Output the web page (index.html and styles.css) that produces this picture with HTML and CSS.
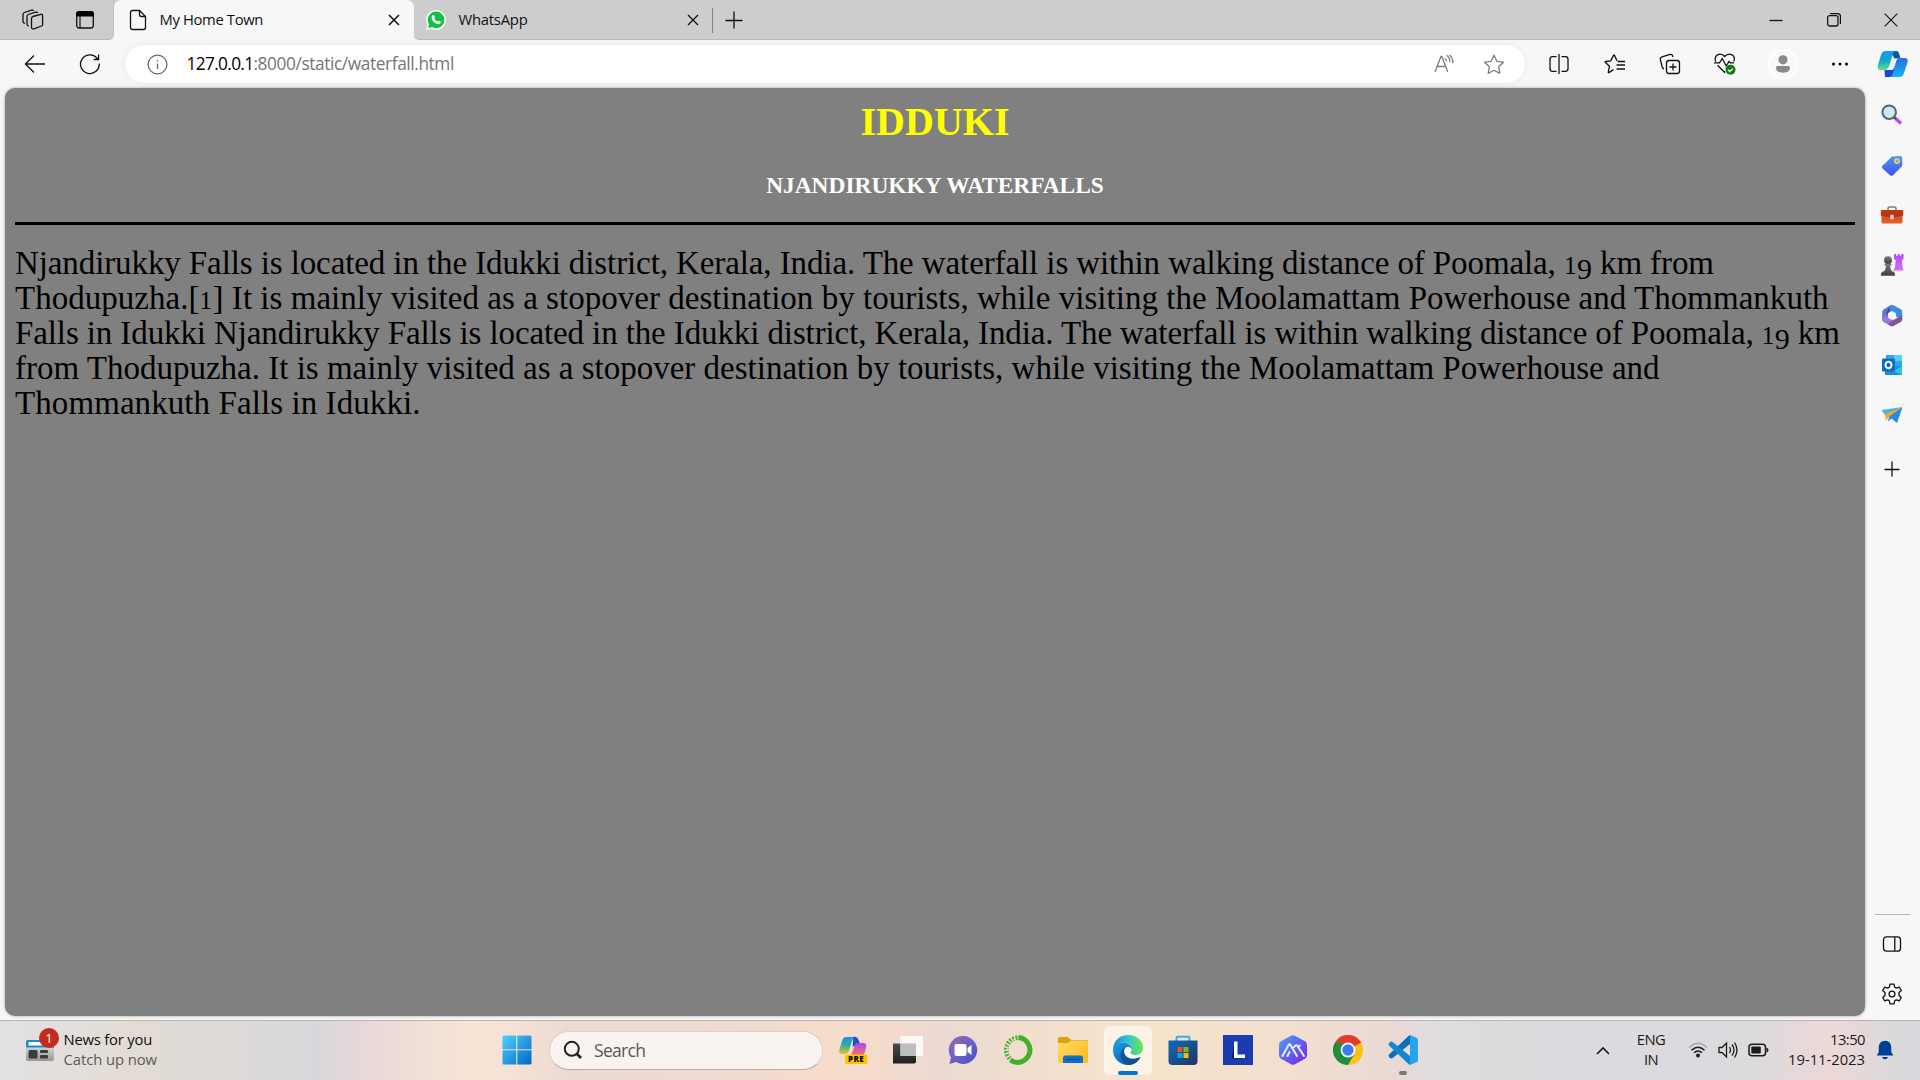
FILE: index.html
```html
<!DOCTYPE html>
<html lang="en">
<head>
<meta charset="utf-8">
<title>My Home Town</title>
<link rel="stylesheet" href="styles.css">
</head>
<body>
<svg class="defs" width="0" height="0">
  <defs>
    <linearGradient id="gWin" x1="0" y1="0" x2="1" y2="1"><stop offset="0" stop-color="#4fd0ff"/><stop offset="1" stop-color="#0067c8"/></linearGradient>
    <linearGradient id="gCopA" x1="0" y1="0" x2="0" y2="1"><stop offset="0" stop-color="#159bea"/><stop offset=".5" stop-color="#13a5cf"/><stop offset="1" stop-color="#5ee08c"/></linearGradient>
    <linearGradient id="gCopB" x1="0" y1="0" x2="0" y2="1"><stop offset="0" stop-color="#2a6cdc"/><stop offset="1" stop-color="#18b5fb"/></linearGradient>
    <linearGradient id="gPreA" x1="0" y1="0" x2="0" y2="1"><stop offset="0" stop-color="#1b8fe8"/><stop offset=".5" stop-color="#2fae9c"/><stop offset="1" stop-color="#f2c51b"/></linearGradient>
    <linearGradient id="gPreB" x1="0" y1="0" x2="0" y2="1"><stop offset="0" stop-color="#a34be8"/><stop offset="1" stop-color="#fb6a7c"/></linearGradient>
    <linearGradient id="gTag" x1="0" y1="0" x2="0" y2="1"><stop offset="0" stop-color="#3f9bf5"/><stop offset="1" stop-color="#4b4ff0"/></linearGradient>
    <linearGradient id="gBox" x1="0" y1="0" x2="0" y2="1"><stop offset="0" stop-color="#c8441b"/><stop offset="1" stop-color="#e8602a"/></linearGradient>
    <linearGradient id="gRook" x1="0" y1="0" x2="0" y2="1"><stop offset="0" stop-color="#b44df5"/><stop offset="1" stop-color="#d36bff"/></linearGradient>
    <linearGradient id="gPawn" x1="0" y1="0" x2="0" y2="1"><stop offset="0" stop-color="#7b7b7b"/><stop offset="1" stop-color="#3d3d3d"/></linearGradient>
    <linearGradient id="gChat" x1="0" y1="0" x2="1" y2="1"><stop offset="0" stop-color="#9a6bb0"/><stop offset=".5" stop-color="#6a5fc8"/><stop offset="1" stop-color="#4a52c8"/></linearGradient>
    <linearGradient id="gFold" x1="0" y1="0" x2="1" y2="1"><stop offset="0" stop-color="#ffdd68"/><stop offset="1" stop-color="#fbb914"/></linearGradient>
    <linearGradient id="gEdgeA" x1="0" y1="0" x2="1" y2="0"><stop offset="0" stop-color="#1587d8"/><stop offset=".45" stop-color="#2ec0da"/><stop offset="1" stop-color="#6be84a"/></linearGradient>
    <linearGradient id="gEdgeB" x1="0" y1="0" x2="1" y2="1"><stop offset="0" stop-color="#1a9ee5"/><stop offset="1" stop-color="#0d4d96"/></linearGradient>
    <linearGradient id="gStore" x1="0" y1="0" x2="1" y2="1"><stop offset="0" stop-color="#0f6cbd"/><stop offset="1" stop-color="#24345c"/></linearGradient>
    <linearGradient id="gHex" x1="0" y1="0" x2="1" y2="1"><stop offset="0" stop-color="#4ba3f5"/><stop offset="1" stop-color="#7a1fe8"/></linearGradient>
    <linearGradient id="gDark" x1="0" y1="0" x2="0" y2="1"><stop offset="0" stop-color="#4a4a4a"/><stop offset="1" stop-color="#1f1f1f"/></linearGradient>
    <linearGradient id="gNews" x1="0" y1="0" x2="0" y2="1"><stop offset="0" stop-color="#d0d0d0"/><stop offset="1" stop-color="#979797"/></linearGradient>
  </defs>
</svg>

<header class="tabstrip">
  <div class="cell ws"><svg width="22" height="22" viewBox="0 0 22 22" class="ln"><path d="M9.500 9.500q0-1.600 1.500-2L18.800 5.300q1.800-.4 1.800 1.400v8.800q0 1.100-1 1.500L12 19.800q-2.500.7-2.500-1.500z"/><path d="M6.800 17.200Q5 16.800 5 15V7.500Q5 6 6.300 5.500L13.500 3.200Q15.300 2.700 15.800 4"/><path d="M3 14.300Q1 14 1 12.500V5.500Q1 4 2.300 3.500L9.500 1.200Q11 .8 11.600 1.800"/></svg></div>
  <div class="cell ta"><svg width="20" height="20" viewBox="0 0 20 20"><rect x="1.700" y="2" width="16.600" height="16" rx="2.500" fill="none" stroke="#111" stroke-width="1.300"/><path d="M1 6.500V4q0-3 3-3h12q3 0 3 3v2.500z" fill="#000"/><path d="M5 6v12" stroke="#111" stroke-width="1.200"/></svg></div>
  <div class="tab active">
    <svg width="18" height="22" viewBox="0 0 18 22" class="ln doc"><path d="M3.500 1.500h7l6 6v11q0 2-2 2h-11q-2 0-2-2v-15q0-2 2-2zM10.500 1.500v4q0 2 2 2h4"/></svg>
    <span class="tabname t1">My Home Town</span>
    <svg width="12" height="12" viewBox="0 0 12 12" class="ln x"><path d="M1 1l10 10M11 1 1 11"/></svg>
  </div>
  <div class="tab idle">
    <svg width="20" height="20" viewBox="0 0 20 20"><path d="M0 20 1.300 15A10 10 0 1 1 5.200 18.800z" fill="#f4f6f4"/><circle cx="10.100" cy="9.900" r="8.300" fill="#12c043"/><path d="M2 18l1.500-5 4 3.800z" fill="#12c043"/><path d="M6.500 5.300q.8-.8 1.500 0l.9 1.700q.2.600-.6 1.500.9 2.100 3 3 1-1 1.600-.8l1.700.9q.6.500-.1 1.600-1.400 1.700-4 .6-4-1.700-4.900-5.500-.1-1.900.9-3z" fill="#fff"/></svg>
    <span class="tabname t2">WhatsApp</span>
    <svg width="12" height="12" viewBox="0 0 12 12" class="ln x"><path d="M1 1l10 10M11 1 1 11"/></svg>
  </div>
  <div class="cell plus"><svg width="18" height="18" viewBox="0 0 18 18" class="ln"><path d="M9 .5v17M.5 9.500h17"/></svg></div>
  <div class="caption">
    <svg width="14" height="14" viewBox="0 0 14 14" class="ln"><path d="M.5 7.500h13"/></svg>
    <svg width="14" height="14" viewBox="0 0 14 14" class="ln"><rect x=".6" y="2.600" width="10.400" height="10.400" rx="2"/><path d="M3 .6h7.500q3 0 3 3V11"/></svg>
    <svg width="14" height="14" viewBox="0 0 14 14" class="ln thin"><path d="M.7.7l12.600 12.600M13.300.7.7 13.300"/></svg>
  </div>
</header>

<nav class="toolbar">
  <div class="cell back"><svg width="22" height="20" viewBox="0 0 22 20" class="ln"><path d="M10 1.500 1.500 10l8.500 8.500M1.500 10H21"/></svg></div>
  <div class="cell reload"><svg width="22" height="22" viewBox="0 0 22 22" class="ln"><path d="M20.300 10.500a9.400 9.400 0 1 1-2.300-5.500l1.500 1.500M19.600 1.500v5h-5"/></svg></div>
  <div class="omnibox">
    <svg width="21" height="21" viewBox="0 0 21 21" class="info"><circle cx="10.500" cy="10.500" r="9.400"/><path d="M10.500 9.500v5.500M10.500 6v1.600"/></svg>
    <span class="url"><span class="host">127.0.0.1</span><span class="path">:8000/static/waterfall.html</span></span>
    <svg width="20" height="20" viewBox="0 0 20 20" class="ln grey read"><path d="M1 18 7 2.500h.8L13.800 18M3.200 12.500h8.300"/><path d="M12.500 1.300q3.800 2.500 3.300 7M15.300.9q4 3 3.600 8.300M10.500 4.500q2 .8 2.200 3"/></svg>
    <svg width="22" height="21" viewBox="0 0 22 21" class="ln grey"><path stroke-linejoin="round" d="M11 1.300l2.900 6 6.500.9-4.700 4.600 1.100 6.600L11 16.300l-5.800 3.100 1.100-6.600L1.600 8.200l6.500-.9z"/></svg>
  </div>
  <div class="tools">
    <svg width="20" height="20" viewBox="0 0 20 20" class="ln"><path d="M7.500 2.700H3.500q-2.500 0-2.500 2.500v9.600q0 2.500 2.500 2.500h4M12.500 2.700h4q2.500 0 2.500 2.500v9.600q0 2.500-2.500 2.500h-4M10 0v20"/></svg>
    <svg width="22" height="20" viewBox="0 0 22 20" class="ln fav"><path d="M9.500 15.600 4.900 18.600q-.8.3-.6-.6l1.200-5.800L1.300 8.300Q.8 7.600 1.700 7.500l5-.6L9.500 1.400q.5-.8 1 0L13 6.800M13.500 7.500h7.500M12.500 11h8.500M12.500 15h8.500"/></svg>
    <svg width="22" height="22" viewBox="0 0 22 22" class="ln coll"><rect x="7.500" y="7.500" width="13" height="13" rx="2.500"/><path d="M14 10.500v7M10.500 14h7M5 15.800Q3.600 15.400 3.200 14L1.300 6.500Q1 4.500 3 3.800L11 1.500q2-.4 2.700 1.500l.3 1.200"/></svg>
    <svg width="24" height="24" viewBox="0 0 24 24" class="ln heart"><path d="M2.700 9.500Q1 4.500 4.500 2.800 8.500.8 11.700 4.500 15 .8 19 2.800 22.500 4.700 20.800 9.500M1 10.800h5.500l2.700-4.300 4 7.500 2.800-4.500 1.300 1.300H21M4.500 13.300l7 7 .7-.7"/><circle cx="17.500" cy="17.800" r="5" fill="#107c10" stroke="none"/><path d="M15 17.800l1.800 1.800 3-3" stroke="#fff"/></svg>
    <svg width="30" height="30" viewBox="0 0 30 30"><circle cx="15" cy="15" r="14" fill="#f8f8f8" stroke="#fff" stroke-width="1.500"/><circle cx="15" cy="10.800" r="4.600" fill="#8a8a8a"/><path d="M8 18.500q0-1.500 1.500-1.500h11q1.500 0 1.500 1.500 0 5.200-7 5.200t-7-5.200z" fill="#8a8a8a"/></svg>
    <svg width="18" height="6" viewBox="0 0 18 6"><circle cx="2.500" cy="3" r="1.500"/><circle cx="9" cy="3" r="1.500"/><circle cx="15.500" cy="3" r="1.500"/></svg>
  </div>
  <div class="copilot"><svg width="31" height="28" viewBox="0 0 31 28"><path d="M13 1h6.500q2 0 2.800 3l1.200 4.500h-6z" fill="#0c5a93"/><path d="M8 27h5q3 0 4-3l3-9-8 5H7.500z" fill="#1c45dc"/><path d="M8.500 1H19q-2.300 0-3.300 3.500L12.500 15q-1.200 5-5.500 5H3.500Q0 20 .8 15.500L4 5q1.200-4 4.500-4z" fill="url(#gCopA)"/><path d="M22.500 27H12q3 0 4-3.500l2.700-11.500q1-4 5-4H28q3.500 0 2.500 4.500L27 23q-1.200 4-4.500 4z" fill="url(#gCopB)"/><path d="M15.500 9.500h4L17 18q-.7 2-2.500 2h-4q1.800-1.500 2.500-4.500l1-4.500q.4-1.500 1.500-1.500z" fill="#f7f7f7"/></svg></div>
</nav>

<div class="middle">
  <main class="page">
    <h1>IDDUKI</h1>
    <h3>NJANDIRUKKY WATERFALLS</h3>
    <hr>
    <p class="story">
      <span class="row l1">Njandirukky Falls is located in the Idukki district, Kerala, India. The waterfall is within walking distance of Poomala, <span class="one">1</span><span class="nine">9</span> km from</span>
      <span class="row l2">Thodupuzha.[<span class="one">1</span>] It is mainly visited as a stopover destination by tourists, while visiting the Moolamattam Powerhouse and Thommankuth</span>
      <span class="row l3">Falls in Idukki Njandirukky Falls is located in the Idukki district, Kerala, India. The waterfall is within walking distance of Poomala, <span class="one">1</span><span class="nine">9</span> km</span>
      <span class="row l4">from Thodupuzha. It is mainly visited as a stopover destination by tourists, while visiting the Moolamattam Powerhouse and</span>
      <span class="row l5">Thommankuth Falls in Idukki.</span>
    </p>
  </main>
  <aside class="sidebar">
    <div class="apps">
      <svg width="22" height="22" viewBox="0 0 22 22"><path d="M14.500 14.500l5.500 5" stroke="#b44df0" stroke-width="3.600"/><path d="M12.500 12.500l2.500 2.500" stroke="#555" stroke-width="2.500"/><circle cx="8.200" cy="8.200" r="6.800" fill="#c9e9fb" stroke="#5f6265" stroke-width="2"/></svg>
      <svg width="22" height="22" viewBox="0 0 22 22"><path d="M12 1.500 19 1q2 0 2.200 2v7q0 1-.7 1.800L12 20.200q-1.500 1.300-3 0L1.500 13.500Q.2 12 1.500 10.800L10.500 2z" fill="url(#gTag)"/><circle cx="16" cy="6" r="2.200" fill="#8d9ad8" stroke="#ffd23c" stroke-width="1.500"/></svg>
      <svg width="24" height="20" viewBox="0 0 24 20"><path d="M8 5V3.500Q8 2 9.500 2h5Q16 2 16 3.500V5" fill="none" stroke="#7c7f83" stroke-width="1.600"/><rect x="1.500" y="5" width="21" height="13.500" rx="1.500" fill="url(#gBox)"/><path d="M.8 6Q.8 5 2 5h20q1.200 0 1.200 1v4.500L12 13 .8 10.500z" fill="#b7380f"/><rect x="10.200" y="9.500" width="3.600" height="5" rx="1.500" fill="#c7cdd2"/></svg>
      <svg width="24" height="24" viewBox="0 0 24 24"><path d="M14 1h2v1.800h1.700V1h2v1.800h1.600V1H23.500v5l-1.600 1.500.7 7.500 1.100 2.500H13l2-3 .7-7L14 6z" fill="url(#gRook)"/><circle cx="8" cy="7.200" r="4" fill="url(#gPawn)"/><path d="M4.500 10.800h7v1.700H10q.2 4 2 6h1.500q1.500 1 1.500 4.200H.8q0-3.200 1.700-4.200H4q1.800-2 2-6H4.500z" fill="url(#gPawn)"/></svg>
      <svg width="22" height="23" viewBox="0 0 22 23"><path d="M9.500 1.300 3 5.200Q1.200 6.300 1.200 8.500V16L7 13V9.500L11 7z" fill="#6b72c9"/><path d="M8.500 2 9.500 1.300q1.500-.9 3 0L19.800 5.200q1.400.8 1.400 2.800v7.500L15 12.500V9.500L8.500 6z" fill="#3c8fe0"/><path d="M8.500 2v6L5 11l3-8z" fill="#1f4f9e"/><path d="M1.200 12v4q.2 1.200 1.300 2L9 21.700q2 1 3 0l1-6-2-.5-4-2.200z" fill="#9b78d6"/><path d="M21.200 11v4.500q0 1.500-1.500 2.500L12.500 22q-1.500.7-3 0L7 20l8-5.500z" fill="#7f5596"/><circle cx="11" cy="11.500" r="3.900" fill="#f7f7f7"/></svg>
      <svg width="22" height="22" viewBox="0 0 22 22"><rect x="5" y="1" width="16" height="12" fill="#28a8ea"/><path d="M13 1h8v6h-8z" fill="#50d0ff"/><path d="M4 12h17v9H4z" fill="#1490df"/><path d="M21 12v9l-9-4z" fill="#2fc1f5"/><rect x="1" y="4.500" width="13" height="13" rx="1.200" fill="#0f6cbd"/><ellipse cx="7.500" cy="11" rx="3" ry="3.300" fill="none" stroke="#fff" stroke-width="1.900"/></svg>
      <svg width="22" height="18" viewBox="0 0 22 18"><path d="M.5 4 21.500 1 5 10.500z" fill="#42b7ef"/><path d="M21.500 1 16 17l-5.500-4.500L7 15.500 8.500 9z" fill="#2589ea"/><path d="M21.500 1 4.500 8v6.500l4-4z" fill="#f7a51c"/></svg>
      <svg width="16" height="16" viewBox="0 0 16 16" class="ln"><path d="M8 .5v15M.5 8.500h15"/></svg>
    </div>
    <div class="bottom">
      <svg width="20" height="18" viewBox="0 0 20 18" class="ln"><rect x="1.500" y="1.800" width="17" height="14.400" rx="3"/><path d="M12.800 2v14"/></svg>
      <svg width="22" height="22" viewBox="0 0 22 22" class="ln"><path d="M9 1.200h4l.7 3 1.600.9 3-1 2 3.400-2.300 2.100v2.800l2.300 2.100-2 3.400-3-1-1.600.9-.7 3H9l-.7-3-1.600-.9-3 1-2-3.400L4 12.400V9.600L1.700 7.500l2-3.400 3 1 1.600-.9z" stroke-linejoin="round"/><circle cx="11" cy="11" r="2.900"/></svg>
    </div>
  </aside>
</div>

<footer class="taskbar">
  <div class="widgets">
    <div class="newsicon">
      <svg width="28" height="22" viewBox="0 0 28 22"><path d="M0 3q0-2 2-2h24q2 0 2 2v8H0z" fill="#1a8ccb"/><path d="M22 1h4q2 0 2 2v8h-6z" fill="#1852b8"/><rect x="2.500" y="3" width="14" height="3.500" fill="#fff"/><path d="M0 8.500h28V20q0 2-2 2H2q-2 0-2-2z" fill="url(#gNews)"/><rect x="2.500" y="11" width="9" height="8.500" rx="1.500" fill="#3b3b3b"/><rect x="14" y="11" width="8" height="3" rx="1" fill="#3b3b3b"/><rect x="14" y="16" width="8" height="3.500" rx="1" fill="#3b3b3b"/></svg>
      <span class="badge">1</span>
    </div>
    <div class="newstext"><span class="n1">News for you</span><span class="n2">Catch up now</span></div>
  </div>
  <svg class="start" width="30" height="30" viewBox="0 0 30 30" fill="url(#gWin)"><path d="M2 .5h12.200v13.700H.5V2Q.5.500 2 .5zM15.300.5h12.700q1.500 0 1.500 1.500v12.200H15.300zM.5 15.300h13.700v14.200H2Q.5 29.500.5 28zM15.300 15.300h14.200V28q0 1.500-1.500 1.500H15.300z"/></svg>
  <div class="search">
    <svg width="20" height="20" viewBox="0 0 20 20"><circle cx="8.800" cy="8.800" r="7" fill="none" stroke="#222" stroke-width="2"/><path d="M13.500 13.500l4.500 4.500" stroke="#222" stroke-width="2.600"/></svg>
    <span class="sr">Search</span>
  </div>
  <div class="pinned">
    <div class="app"><svg width="30" height="30" viewBox="0 0 30 30"><path d="M15 2q4-1 5.500 3l1.300 3-7 4z" fill="#1b50cf"/><path d="M8 2h9q-2 0-3 3.500L11.500 14q-1.300 5-4.500 5H4Q.5 19 1.300 15L4 6q1.200-4 4-4z" fill="url(#gPreA)"/><path d="M18 8h7q4 0 3.200 4L26 20H13z" fill="url(#gPreB)"/><rect x="7" y="19.500" width="22.500" height="9.500" rx="2.500" fill="#ffc400"/><text x="10" y="27.200" class="pre">PRE</text></svg></div>
    <div class="app"><svg width="30" height="30" viewBox="0 0 30 30"><path d="M0 8.500h23v18q0 2-2 2H0z" fill="url(#gDark)"/><rect x="7.500" y="1" width="22.500" height="20" fill="#fbfbfb" opacity=".93"/><path d="M7.500 8.500H23V21H7.500z" fill="#bdbdbd"/></svg></div>
    <div class="app"><svg width="30" height="30" viewBox="0 0 30 30"><path d="M15 1a14 14 0 1 1-7 26L1.500 29 3 22.500A14 14 0 0 1 15 1z" fill="url(#gChat)"/><rect x="6.500" y="9" width="12" height="12" rx="2" fill="#fff"/><path d="M19.500 13l4-3v10l-4-3z" fill="#fff"/></svg></div>
    <div class="app"><svg width="30" height="30" viewBox="0 0 30 30"><path d="M15.500 2.600A12.400 12.400 0 1 1 8 25.500" fill="none" stroke="#43b02a" stroke-width="5"/><path d="M9 25.500A12.400 12.400 0 0 1 16 2.600" fill="none" stroke="#43b02a" stroke-width="4.600" stroke-dasharray="1.800 1.400"/><path d="M6.500 22.500A12 12 0 0 1 14 3.500" fill="none" stroke="#f3dfcc" stroke-width="1" stroke-dasharray="2 2"/></svg></div>
    <div class="app"><svg width="30" height="30" viewBox="0 0 30 30"><path d="M0 4q0-2 2-2h7q1 0 2 1l2.500 2H28q2 0 2 2v4H0z" fill="#dfa008"/><path d="M0 8h10l3-2.500h15q2 0 2 2V26q0 2-2 2H2q-2 0-2-2z" fill="url(#gFold)"/><path d="M5 28v-5q0-2.500 2.500-2.500h15q2.500 0 2.500 2.500v5z" fill="#0f6fc6"/><path d="M8.500 24.500h13" stroke="#0a4a8c" stroke-width="1.200"/></svg></div>
    <div class="app current"><svg width="30" height="30" viewBox="0 0 30 30"><path d="M0 14C1 5 7 0 15 0c9 0 15 6 15 12.500 0 5-3.500 7.500-7.500 7.500-3 0-5-1-5-2.200 0-.8 1.200-1.300 1.200-3.500C18.700 11 15 7.500 10 7.500 5 7.500 2 10 0 14z" fill="url(#gEdgeA)"/><path d="M0 15C0 10 4 7.500 9.500 7.500c5.500 0 9 3.500 9.200 7-1-2-2.500-3-4-2.800-3 .4-4 3.300-3.500 6 1 5 6 7.300 10.500 6.300 2.500-.5 4-1.600 5.500-2-2 5-6.500 8-12 8C6 30 0 23 0 15z" fill="url(#gEdgeB)"/><path d="M11.500 12.500c-2.500 1.500-4 4-4 7.500 0 4 2.500 8 7.500 10 6 0 10.500-3.500 12.500-8-7 3-15 1.500-16.300-4.300-.3-2 .1-4 .3-5.200z" fill="#0e4a8e" opacity=".75"/></svg><i></i></div>
    <div class="app"><svg width="30" height="30" viewBox="0 0 30 30"><path d="M8.500 6V3q0-1.200 1.200-1.200h10.600q1.200 0 1.200 1.200v3" fill="none" stroke="#26b5ee" stroke-width="2"/><path d="M.5 5.500h29V26q0 4-4 4h-21q-4 0-4-4z" fill="url(#gStore)"/><path d="M9.500 12h5v5h-5z" fill="#f25022"/><path d="M15.500 12h5v5h-5z" fill="#7fba00"/><path d="M9.500 18h5v5h-5z" fill="#00a4ef"/><path d="M15.500 18h5v5h-5z" fill="#ffb900"/></svg></div>
    <div class="app"><svg width="30" height="30" viewBox="0 0 30 30"><path d="M0 0h30v30H0z" fill="#1b3cb0"/><path d="M11 10 8.500 23.500H20L15 22z" fill="#0b2540"/><path d="M11 6.500h3.500v13h7.500V23H11z" fill="#fff"/></svg></div>
    <div class="app"><svg width="30" height="30" viewBox="0 0 30 30"><path d="M13 .8q2-1 4 0l10 5.500q2 1.200 2 3.500v10.400q0 2.300-2 3.500l-10 5.500q-2 1-4 0L3 23.700q-2-1.200-2-3.500V9.800Q1 7.500 3 6.300z" fill="url(#gHex)"/><path d="M4.500 21 10.500 10q1-1.500 2 0l6.500 11M9.500 21l2-4M16 12l1.500-1.500q1-.8 2 .5L26 21M21.500 11v-.5" fill="none" stroke="#e8efff" stroke-width="2" stroke-linecap="round"/></svg></div>
    <div class="app"><svg width="30" height="30" viewBox="0 0 30 30"><circle cx="15" cy="15" r="15" fill="#fbc116"/><path d="M15 15 2 7.500A15 15 0 0 1 28 7.500z" fill="#e33b2e"/><path d="M2 7.500A15 15 0 0 0 15 30l6.500-11.300L15 15z" fill="#1e8e3e"/><path d="M2 7.500 8.500 18.700 15 8z" fill="#1e8e3e"/><path d="M15 7.500h13q-.5-1-1-1.700L15 4 8.500 11z" fill="#e33b2e"/><circle cx="15" cy="15" r="7.400" fill="#fff"/><circle cx="15" cy="15" r="5.700" fill="#3b7ded"/></svg></div>
    <div class="app code"><svg width="30" height="30" viewBox="0 0 30 30"><path d="M22 0v9L4 23.500q-1.500.5-3-1.500-1-1.500 0-2.500L20.500 1z" fill="#0c6fb5"/><path d="M22 30v-9L4 6.500Q2.500 6 1 8q-1 1.500 0 2.500L20.500 29z" fill="#1287d2"/><path d="M22 0l6.500 2.800Q30 3.500 30 5v20q0 1.500-1.500 2.200L22 30z" fill="#25a3ec"/></svg><i></i></div>
  </div>
  <div class="tray">
    <svg class="chev" width="14" height="9" viewBox="0 0 14 9"><path d="M1 8l6-6 6 6" fill="none" stroke="#1b1b1b" stroke-width="1.600"/></svg>
    <div class="lang"><span class="e1">ENG</span><span class="e2">IN</span></div>
    <svg class="wifi" width="20" height="16" viewBox="0 0 20 16" fill="none" stroke="#1b1b1b" stroke-width="1.500"><path d="M1 5.800Q10-3 19 5.800" stroke="#aaa"/><path d="M3.500 8.300q6.500-6 13 0M6 10.800q4-3.500 8 0"/><circle cx="10" cy="13.500" r="1.200" fill="#1b1b1b"/></svg>
    <svg class="vol" width="20" height="18" viewBox="0 0 20 18" fill="none" stroke="#1b1b1b" stroke-width="1.300"><path d="M1 6.500h3L8.500 2v14L4 11.500H1zM11.500 6q2 3 0 6M14 3.500q4 5.500 0 11M16.500 1.500q5 7.500 0 15"/></svg>
    <svg class="bat" width="21" height="14" viewBox="0 0 21 14"><rect x="1" y="1.200" width="16.500" height="11.600" rx="3" fill="none" stroke="#1b1b1b" stroke-width="1.500"/><rect x="3.300" y="3.500" width="9.500" height="7" rx="1" fill="#1b1b1b"/><path d="M18.500 4.500q2 .5 2 2.500t-2 2.500z" fill="#1b1b1b"/></svg>
    <div class="clock"><span class="c1">13:50</span><span class="c2">19-11-2023</span></div>
    <svg class="bell" width="18" height="20" viewBox="0 0 18 20"><path d="M9 .8q6 .3 6.300 6.500V12l2 3.500H.7L2.700 12V7.300Q3 1.100 9 .8zM6 17h6q-.8 2.300-3 2.300T6 17z" fill="#003e92"/></svg>
  </div>
</footer>
</body>
</html>
```
FILE: styles.css
```css
* { box-sizing: border-box; }
body {
  margin: 0;
  width: 1920px;
  height: 1080px;
  overflow: hidden;
  display: flex;
  flex-direction: column;
  background: #f7f7f7;
  font-family: "Open Sans", "Noto Sans", sans-serif;
  color: #111;
}
.defs { position: absolute; }
svg { display: block; flex: none; }
.ln { fill: none; stroke: #111; stroke-width: 1.3; }
.ln.thin { stroke-width: 1.1; }
.ln.grey { stroke: #7c7c7c; }
.ln.x { stroke-width: 1.5; }
.cell { display: flex; align-items: center; justify-content: center; height: 40px; }

/* tab strip */
.tabstrip { display: flex; height: 40px; background: #f7f7f7; }
.ws { width: 59px; padding-left: 6px; }
.ta { width: 55px; padding-right: 3px; }
.ws, .ta, .idle, .plus, .caption { background: #cdcdcd; border-bottom: 1px solid #b9b9b9; }
.ta { border-radius: 0 0 5px 0; border-right: 1px solid #c0c0c0; }
.tab { display: flex; align-items: center; height: 40px; font-size: 14.8px; }
.tabname { flex: 1; white-space: nowrap; margin-top: -2px; }
.active { width: 300px; padding: 0 14px 0 15px; border-radius: 7px 7px 0 0; background: #f7f7f7; box-shadow: 0 -8px 0 #cdcdcd; }
.active .tabname { margin-left: 12.5px; }
.idle { width: 299px; padding: 0 14px 0 12px; border-radius: 0 0 0 5px; }
.idle .tabname { margin-left: 12.5px; }
.idle .x { stroke-width: 1.3; }
.t1 { letter-spacing: -.36px; }
.t2 { letter-spacing: -.22px; }
.plus { width: 42px; position: relative; }
.plus::before { content: ""; position: absolute; left: -1px; top: 8px; width: 1px; height: 25px; background: #808080; }
.caption { flex: 1; display: flex; align-items: center; justify-content: flex-end; gap: 43.5px; padding-right: 22px; }

/* address bar */
.toolbar { display: flex; align-items: center; height: 48px; }
.back { width: 62px; padding-left: 8px; }
.reload { width: 63px; padding-right: 7px; }
.omnibox { display: flex; align-items: center; width: 1400px; height: 38px; padding: 0 20px 0 22px; border-radius: 19px; background: #fff; box-shadow: 0 0 5px #e6e6e6; }
.info { fill: none; stroke: #6a6a6a; stroke-width: 1.3; }
.url { display: flex; flex: 1; margin: -1px 0 0 18.5px; font-size: 17.3px; line-height: 25px; white-space: nowrap; }
.host { color: #000; letter-spacing: -.66px; }
.path { color: #757575; letter-spacing: -.4px; }
.read { margin-right: 29px; }
.tools { display: flex; align-items: center; justify-content: space-between; width: 300px; margin-left: 24px; }
.fav, .coll, .heart { margin: 0 -2px 0 2px; }
.copilot { margin-left: 28px; }

/* page */
.middle { display: flex; height: 932px; }
.page { width: 1860px; height: 928px; margin-left: 5px; padding: 11px 10px; border-radius: 10px; background: #808080; box-shadow: 0 0 3px #999; font-family: "Liberation Serif", "Times New Roman", serif; }
h1, h3 { text-align: center; font-weight: 700; }
h1 { margin: 0; font-size: 40px; line-height: 46px; color: #ff0; }
h3 { margin: 27px 0 0; font-size: 23.4px; line-height: 27px; color: #fff; }
hr { height: 3px; margin: 23px 0 0; border: 0; background: #000; }
.story { margin: 21px 0 0; font-size: 33px; line-height: 35px; color: #000; }
.row { display: block; white-space: nowrap; height: 35px; }
.l1 { letter-spacing: -.1px; }
.l2 { letter-spacing: .03px; }
.l3 { letter-spacing: -.11px; }
.l5 { letter-spacing: .08px; }
/* old-style figures */
.one { font-size: 25px; line-height: 0; letter-spacing: .5px; }
.nine { font-size: 30px; line-height: 0; vertical-align: -5px; }

/* sidebar */
.sidebar { display: flex; flex-direction: column; justify-content: space-between; width: 55px; padding-bottom: 5px; }
.apps, .bottom { display: grid; justify-items: center; align-items: center; padding-right: 1px; }
.apps { grid-template-rows: 53px 49px 50px 50px 50px 50px 50px 57px; }
.bottom { grid-template-rows: 57px 43px; position: relative; }
.bottom::before { content: ""; position: absolute; left: 10px; top: -1px; width: 35px; height: 1px; background: #b5b5b5; }

/* taskbar */
.taskbar {
  display: flex;
  align-items: center;
  height: 60px;
  padding-bottom: 1px;
  border-top: 1px solid #b7b2b0;
  background: linear-gradient(90deg, #e2e1e2 0, #e3dcd3 130px, #dddad8 230px, #dad7dc 320px, #ead8d7 370px, #f8e5d6 470px, #f6e3d5 510px, #ecd9d2 570px, #eedad1 740px, #f7dcca 820px, #f5dcca 870px, #ecd9d2 940px, #f6e4ca 1130px, #f2dfcf 1290px, #ead8d4 1390px, #dfdddc 1430px, #dbdade 1560px, #dddade 1760px, #edd8d6 1830px, #ddd9db 1885px, #d9d9de 1920px);
}
.widgets { display: flex; align-items: center; width: 501.5px; padding-left: 26px; }
.newsicon { position: relative; width: 28px; }
.badge { position: absolute; left: 13px; top: -11px; width: 20px; height: 20px; border-radius: 50%; background: #c42b1c; color: #fff; font-size: 13px; line-height: 20px; text-align: center; }
.newstext { display: grid; margin: -2px 0 0 9.5px; font-size: 14.8px; line-height: 20px; white-space: nowrap; }
.n1 { letter-spacing: -.2px; }
.n2 { color: #5c5957; letter-spacing: -.06px; }
.search { display: flex; align-items: center; width: 274px; height: 39px; margin-left: 17.5px; padding-left: 13px; border: 1px solid #dccfca; border-bottom-color: #bcaaa6; border-radius: 20px; background: #faf4f1; color: #5b5755; font-size: 17.5px; line-height: 24px; }
.sr { margin: -1px 0 0 11px; letter-spacing: -.7px; }
.pinned { display: grid; grid-template-columns: repeat(11, 48px); column-gap: 7px; margin-left: 6px; }
.app { position: relative; display: flex; align-items: center; justify-content: center; height: 49px; border-radius: 6px; }
.current { background: #fcf3e8; box-shadow: 0 0 0 1px #f3e4d6; }
.app i { position: absolute; bottom: 0; width: 20px; height: 4px; border-radius: 2px; background: #0078d4; }
.code i { width: 8px; background: #7d7977; }
.pre { font: 800 8px "Open Sans", sans-serif; letter-spacing: .4px; fill: #111; }
.tray { display: flex; align-items: center; flex: 1; justify-content: flex-end; padding-right: 26px; font-size: 14.8px; line-height: 20px; color: #1b1b1b; }
.lang { display: grid; justify-items: center; width: 30px; margin: -2px 22px 0 26px; white-space: nowrap; }
.e1, .e2 { letter-spacing: -.6px; }
.wifi { margin-right: 10px; }
.vol { margin-right: 10px; }
.clock { display: grid; justify-items: end; width: 77px; margin: -3px 11px 0 19px; white-space: nowrap; }
.c1 { letter-spacing: -.55px; }
.c2 { letter-spacing: -.03px; }
```
